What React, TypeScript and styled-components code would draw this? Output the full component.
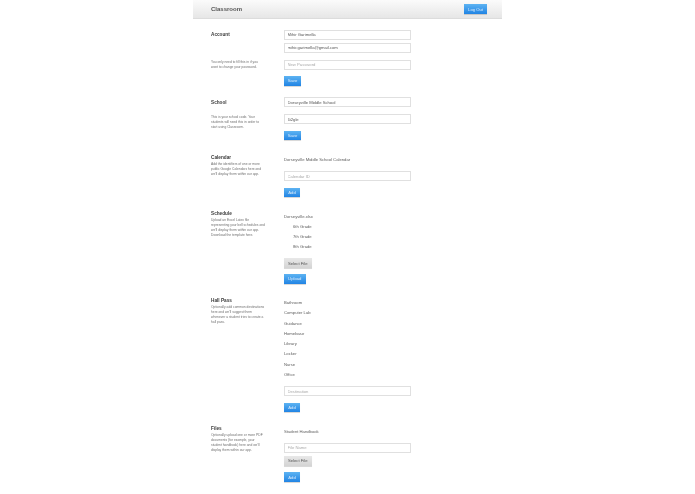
import React from 'react';
import styled, { createGlobalStyle } from 'styled-components';

const Global = createGlobalStyle`
  html, body {
    margin: 0;
    padding: 0;
    background: #fff;
    font-family: "Liberation Sans", Arial, sans-serif;
    color: #444;
  }
`;

const Page = styled.div`
  width: 309px;
  height: 494px;
  margin: 0 auto;
  overflow: hidden;
  filter: blur(0.3px);
`;

const Header = styled.header`
  height: 18px;
  padding: 0 15px 0 18px;
  display: flex;
  align-items: center;
  justify-content: space-between;
  background: linear-gradient(#fbfbfb, #e6e6e6);
  border-bottom: 1px solid #dcdcdc;
`;

const Brand = styled.div`
  font-size: 6px;
  font-weight: bold;
  color: #555;
`;

const Content = styled.main`
  padding: 10.5px 0 0 18px;
`;

const Row = styled.div<{ $gap?: number }>`
  display: grid;
  grid-template-columns: 73px 127px;
  margin-bottom: ${(p) => p.$gap ?? 0}px;
`;

const Side = styled.div<{ $flat?: boolean }>`
  min-width: 0;
  padding-right: 17px;
  height: ${(p) => (p.$flat ? '10px' : 'auto')};
`;

const Stack = styled.div<{ $gap: number }>`
  display: flex;
  flex-direction: column;
  align-items: flex-start;
  gap: ${(p) => p.$gap}px;
`;

const Title = styled.h2<{ $top?: number }>`
  margin: ${(p) => p.$top ?? 0}px 0 0;
  font-size: 4.7px;
  line-height: 6px;
  font-weight: bold;
  color: #3a3a3a;
`;

const Hint = styled.p<{ $top?: number }>`
  margin: ${(p) => p.$top ?? 0}px 0 0;
  font-size: 3.3px;
  line-height: 5px;
  color: #707070;
  white-space: nowrap;
`;

const Field = styled.input`
  box-sizing: border-box;
  width: 127px;
  height: 10px;
  padding: 0 2.5px;
  border: 1px solid #e0e0e0;
  background: #fff;
  font: 4.2px "Liberation Sans", Arial, sans-serif;
  color: #555;
  outline: none;

  &::placeholder {
    color: #aaa;
  }
`;

const Button = styled.button<{ $width: number; $plain?: boolean }>`
  box-sizing: border-box;
  width: ${(p) => p.$width}px;
  height: ${(p) => (p.$plain ? 10 : 9.5)}px;
  padding: 0;
  border: none;
  font: 4.2px "Liberation Sans", Arial, sans-serif;
  color: ${(p) => (p.$plain ? '#555' : '#dcecfb')};
  background: ${(p) =>
    p.$plain ? 'linear-gradient(#e8e8e8, #d4d4d4)' : 'linear-gradient(#5db3f2, #2184e4)'};
  box-shadow: 0 0.5px 0.5px rgba(0, 0, 0, 0.15);
`;

const Item = styled.div<{ $indent?: boolean }>`
  height: 10.25px;
  display: flex;
  align-items: center;
  padding-left: ${(p) => (p.$indent ? 9 : 0)}px;
  font-size: 4.2px;
  color: #606060;
`;

const grades = ['6th Grade', '7th Grade', '8th Grade'];
const destinations = ['Bathroom', 'Computer Lab', 'Guidance', 'Homebase', 'Library', 'Locker', 'Nurse', 'Office'];

const App = () => (
  <Page>
    <Global />
    <Header>
      <Brand>Classroom</Brand>
      <Button $width={23}>Log Out</Button>
    </Header>
    <Content>
      <Row $gap={3}>
        <Side>
          <Title $top={2.5}>Account</Title>
        </Side>
        <Field defaultValue="Mihir Garimella" />
      </Row>
      <Row $gap={7}>
        <Side />
        <Field defaultValue="mihir.garimella@gmail.com" />
      </Row>
      <Row $gap={6.5}>
        <Side $flat>
          <Hint>
            You only need to fill this in if you
            <br />
            want to change your password.
          </Hint>
        </Side>
        <Field placeholder="New Password" />
      </Row>
      <Row $gap={11.5}>
        <Side />
        <Stack $gap={0}>
          <Button $width={17}>Save</Button>
        </Stack>
      </Row>

      <Row $gap={7}>
        <Side>
          <Title $top={3}>School</Title>
        </Side>
        <Field defaultValue="Dorseyville Middle School" />
      </Row>
      <Row $gap={6.5}>
        <Side $flat>
          <Hint $top={1}>
            This is your school code. Your
            <br />
            students will need this in order to
            <br />
            start using Classroom.
          </Hint>
        </Side>
        <Field defaultValue="6i2gle" />
      </Row>
      <Row $gap={14.5}>
        <Side />
        <Stack $gap={0}>
          <Button $width={17}>Save</Button>
        </Stack>
      </Row>

      <Row $gap={13.75}>
        <Side>
          <Title>Calendar</Title>
          <Hint $top={1}>
            Add the identifiers of one or more
            <br />
            public Google Calendars here and
            <br />
            we'll display them within our app.
          </Hint>
        </Side>
        <Stack $gap={6.5}>
          <Item>Dorseyville Middle School Calendar</Item>
          <Field placeholder="Calendar ID" />
          <Button $width={16}>Add</Button>
        </Stack>
      </Row>

      <Row $gap={14}>
        <Side>
          <Title>Schedule</Title>
          <Hint $top={1}>
            Upload an Excel Latex file
            <br />
            representing your bell schedules and
            <br />
            we'll display them within our app.
            <br />
            Download the template here.
          </Hint>
        </Side>
        <Stack $gap={6}>
          <div>
            <Item>Dorseyville.xlsx</Item>
            {grades.map((g) => (
              <Item key={g} $indent>
                {g}
              </Item>
            ))}
          </div>
          <Button $width={27.5} $plain>
            Select File
          </Button>
          <Button $width={21.5}>Upload</Button>
        </Stack>
      </Row>

      <Row $gap={14}>
        <Side>
          <Title>Hall Pass</Title>
          <Hint $top={1}>
            Optionally add common destinations
            <br />
            here and we'll suggest them
            <br />
            whenever a student tries to create a
            <br />
            hall pass.
          </Hint>
        </Side>
        <Stack $gap={6.5}>
          <div>
            {destinations.map((d) => (
              <Item key={d}>{d}</Item>
            ))}
          </div>
          <Field placeholder="Destination" />
          <Button $width={16}>Add</Button>
        </Stack>
      </Row>

      <Row>
        <Side>
          <Title>Files</Title>
          <Hint $top={1}>
            Optionally upload one or more PDF
            <br />
            documents (for example, your
            <br />
            student handbook) here and we'll
            <br />
            display them within our app.
          </Hint>
        </Side>
        <Stack $gap={6.5}>
          <Item>Student Handbook</Item>
          <Stack $gap={3}>
            <Field placeholder="File Name" />
            <Button $width={27.5} $plain>
              Select File
            </Button>
          </Stack>
          <Button $width={16}>Add</Button>
        </Stack>
      </Row>
    </Content>
  </Page>
);

export default App;
